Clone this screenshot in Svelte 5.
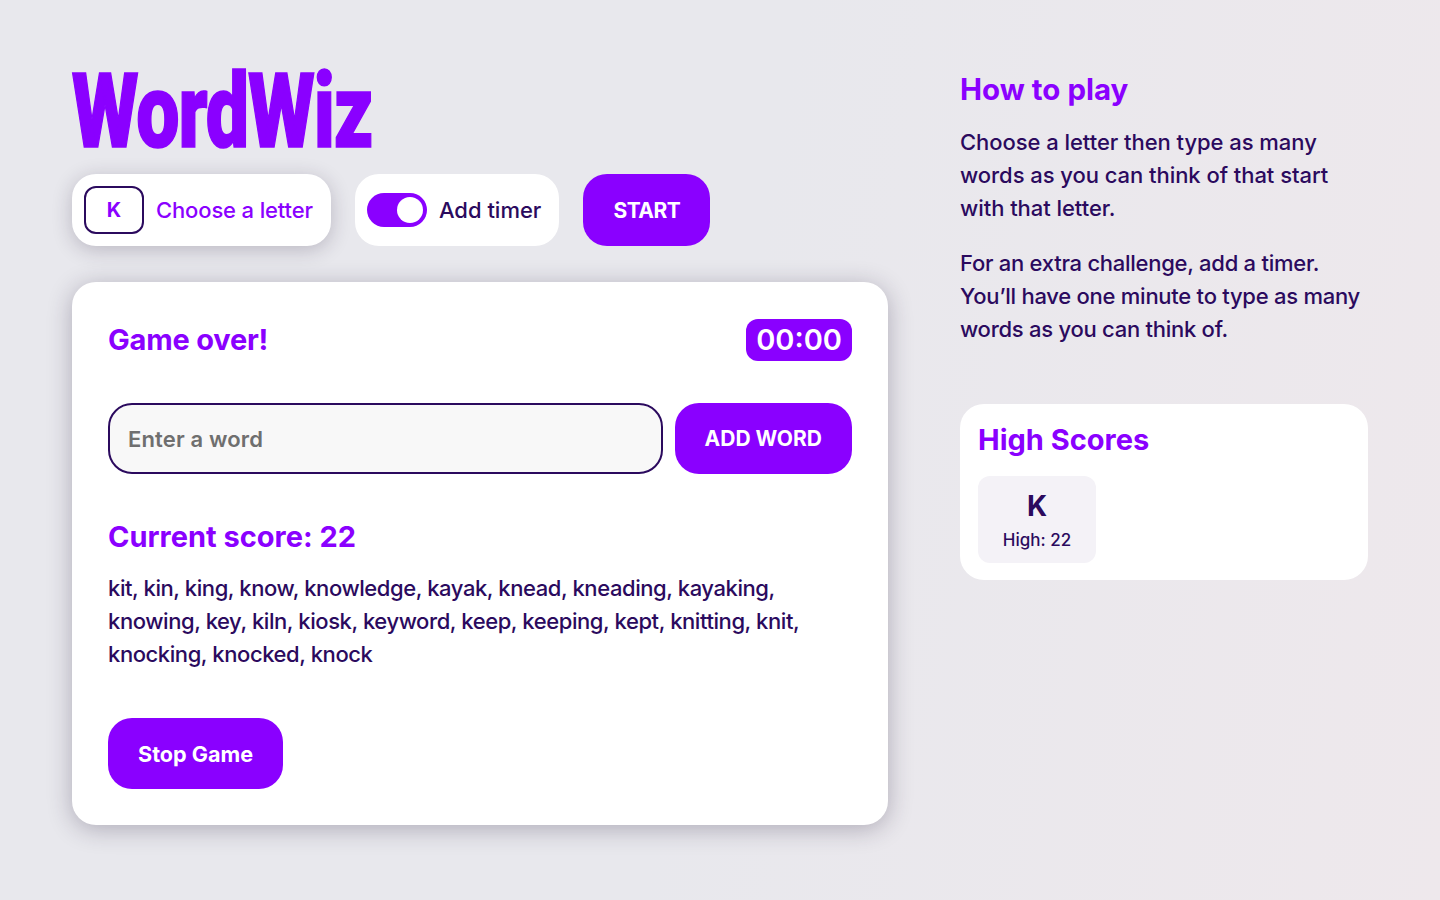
<script>
  const words = "kit, kin, king, know, knowledge, kayak, knead, kneading, kayaking, knowing, key, kiln, kiosk, keyword, keep, keeping, kept, knitting, knit, knocking, knocked, knock";
</script>

<div class="page">
  <main class="main">
    <h1 class="logo"><span>WordWiz</span></h1>
    <div class="controls">
      <div class="pill raised">
        <div class="letter">K</div>
        <span class="choose">Choose a letter</span>
      </div>
      <div class="pill">
        <div class="toggle"><div class="knob"></div></div>
        <span class="timer-label">Add timer</span>
      </div>
      <button class="btn start">START</button>
    </div>
    <section class="card">
      <div class="head">
        <h2 class="over">Game over!</h2>
        <div class="clock">00:00</div>
      </div>
      <div class="entry">
        <input class="field" placeholder="Enter a word" />
        <button class="btn">ADD WORD</button>
      </div>
      <h2 class="score">Current score: 22</h2>
      <p class="words">{words}</p>
      <button class="btn stop">Stop Game</button>
    </section>
  </main>
  <aside class="side">
    <h2>How to play</h2>
    <p class="first">Choose a letter then type as many words as you can think of that start with that letter.</p>
    <p class="second">For an extra challenge, add a timer. You’ll have one minute to type as many words as you can think of.</p>
    <div class="scores">
      <h2>High Scores</h2>
      <div class="tile">
        <div class="tile-letter">K</div>
        <div class="tile-score">High: 22</div>
      </div>
    </div>
  </aside>
</div>

<style>
  :global(body) {
    margin: 0;
    background: linear-gradient(100deg, #e8e8ed 0%, #e8e8ed 50%, #eee8ec 100%);
    font-family: Inter, "Liberation Sans", sans-serif;
    color: #2b0a5e;
  }
  .page {
    display: flex;
    gap: 72px;
    padding: 72px 72px 0;
    height: 828px;
    box-sizing: content-box;
  }
  .main { width: 816px; flex: none; }
  .logo {
    margin: 0;
    height: 78px;
    font: 900 104px/80px Roboto, sans-serif;
    color: #8a00ff;
    letter-spacing: -1.5px;
    white-space: nowrap;
    -webkit-text-stroke: 1.6px #8a00ff;
  }
  .logo span { display: inline-block; transform: scaleX(0.74); transform-origin: -1px center; }
  .controls { display: flex; gap: 24px; margin-top: 24px; }
  .pill {
    height: 72px;
    box-sizing: border-box;
    background: #fff;
    border-radius: 24px;
    padding: 0 18px 0 12px;
    display: flex;
    align-items: center;
    gap: 12px;
    font-size: 22px;
    font-weight: 500;
  }
  .raised { box-shadow: 0 4px 20px rgba(40, 30, 60, .24); }
  .letter {
    width: 60px;
    height: 48px;
    box-sizing: border-box;
    border: 2px solid #2b0a5e;
    border-radius: 12px;
    color: #8a00ff;
    font-weight: 700;
    font-size: 20px;
    display: flex;
    align-items: center;
    justify-content: center;
  }
  .choose { color: #8a00ff; letter-spacing: -0.14px; }
  .toggle {
    width: 60px;
    height: 34px;
    border-radius: 17px;
    background: #8a00ff;
    position: relative;
  }
  .knob {
    position: absolute;
    right: 4px;
    top: 4px;
    width: 26px;
    height: 26px;
    border-radius: 50%;
    background: #fff;
  }
  .btn {
    height: 72px;
    border: 0;
    border-radius: 24px;
    background: #8a00ff;
    color: #fff;
    padding: 0 30px;
    font: 700 21px Inter, sans-serif;
    flex: none;
  }
  .start { letter-spacing: -0.5px; }
  .stop { font-size: 21.6px; height: 71px; }
  .card {
    margin-top: 36px;
    height: 543px;
    box-sizing: border-box;
    background: #fff;
    border-radius: 24px;
    padding: 37px 36px 36px;
    box-shadow: 0 4px 24px rgba(40, 30, 60, .3);
  }
  h2 {
    margin: 0;
    color: #8a00ff;
    font-size: 29px;
    font-weight: 700;
    line-height: 42px;
  }
  .over { letter-spacing: -0.2px; }
  .head { display: flex; justify-content: space-between; align-items: center; }
  .clock {
    background: #8a00ff;
    color: #fff;
    border-radius: 12px;
    font-size: 29px;
    font-weight: 600;
    line-height: 42px;
    padding: 0 10px;
  }
  .entry { display: flex; gap: 12px; margin-top: 42px; }
  .entry .btn { height: 71px; }
  .field {
    flex: 1;
    min-width: 0;
    height: 71px;
    box-sizing: border-box;
    border: 2px solid #2b0a5e;
    border-radius: 24px;
    background: #f8f8f8;
    padding: 0 18px;
    font: 600 22px Inter, sans-serif;
    letter-spacing: 0.15px;
    outline: none;
  }
  .field::placeholder { color: #6f6f6f; opacity: 1; }
  .score { margin-top: 42px; }
  .words {
    margin: 14px 0 47px;
    font-size: 22px;
    font-weight: 500;
    line-height: 33px;
    letter-spacing: -0.42px;
  }
  .side { width: 408px; flex: none; }
  .side > h2 { line-height: 35px; font-size: 29.5px; }
  .side p {
    margin: 19px 0 0;
    font-size: 22px;
    font-weight: 500;
    line-height: 33px;
  }
  .side .first { letter-spacing: -0.05px; }
  .side .second { margin-top: 22px; letter-spacing: -0.26px; }
  .scores {
    margin-top: 58px;
    background: #fff;
    border-radius: 24px;
    padding: 18px;
    height: 176px;
    box-sizing: border-box;
  }
  .scores h2 { font-size: 29px; line-height: 36px; }
  .tile {
    margin-top: 18px;
    width: 118px;
    height: 87px;
    background: #f4f2f7;
    border-radius: 12px;
    text-align: center;
    padding-top: 12px;
    box-sizing: border-box;
  }
  .tile-letter { font-size: 28px; font-weight: 700; line-height: 36px; }
  .tile-score { font-size: 17px; font-weight: 500; line-height: 24px; margin-top: 4px; }
</style>
